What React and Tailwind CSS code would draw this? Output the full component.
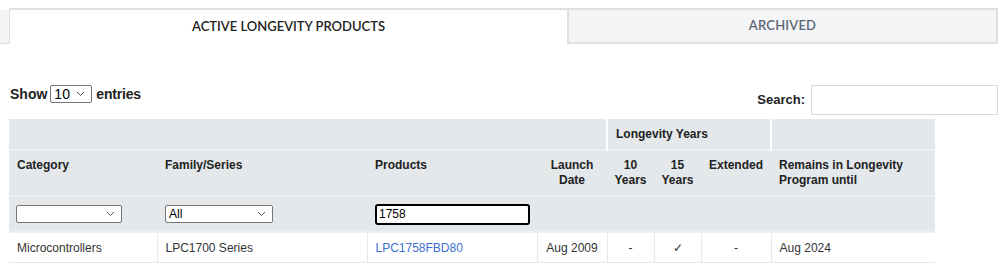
import React from "react";

const Chevron = () => (
  <svg width="9" height="6" viewBox="0 0 9 6" className="shrink-0">
    <path d="M1 1 L4.5 4.5 L8 1" fill="none" stroke="#555" strokeWidth="1" />
  </svg>
);

function FakeSelect({ value, className }) {
  return (
    <div
      className={
        "flex items-center justify-between bg-white border border-[#767676] rounded-[2px] pl-[3px] pr-[6px] leading-none text-black " +
        className
      }
    >
      <span>{value}</span>
      <Chevron />
    </div>
  );
}

export default function App() {
  const sans = { fontFamily: '"Liberation Sans", Arial, sans-serif' };
  return (
    <div className="w-[999px] h-[269px] bg-white overflow-hidden" style={sans}>
      {/* Tabs */}
      <div className="flex pt-[8px] h-[44px]" style={{ fontFamily: "Lato, sans-serif" }}>
        <div className="w-[9px] mt-[2px] bg-[#f4f5f7] border-b border-[#dcdcdc]" />
        <div className="w-[558px] border-t-2 border-l border-[#e0e0e0] bg-white flex items-center justify-center text-[13px] font-semibold text-[#222]">
          ACTIVE LONGEVITY PRODUCTS
        </div>
        <div className="w-[431px] border-2 border-[#e0e0e0] bg-[#f4f5f7] flex items-center justify-center text-[13px] font-semibold tracking-[0.2px] text-[#5b6574]">
          ARCHIVED
        </div>
      </div>

      {/* Controls */}
      <div className="flex justify-between items-start pl-[10px] pr-[1px] mt-[41px] h-[34px]">
        <div className="flex items-center text-[14px] font-bold text-[#222] h-[18px]">
          <span>Show</span>
          <FakeSelect value="10" className="w-[42px] h-[18px] ml-[3px] mr-[4px] text-[14px] font-normal" />
          <span className="tracking-[-0.2px]">entries</span>
        </div>
        <div className="flex items-center">
          <span className="text-[13px] font-bold text-[#222] mr-[6px] mb-[1px]">Search:</span>
          <div className="w-[187px] h-[30px] border border-[#d9d9d9] bg-white" />
        </div>
      </div>

      {/* Table */}
      <table className="ml-[9px] border-collapse table-fixed w-[926px] text-[#333]">
        <colgroup>
          <col className="w-[148px]" />
          <col className="w-[210px]" />
          <col className="w-[170px]" />
          <col className="w-[70px]" />
          <col className="w-[47px]" />
          <col className="w-[47px]" />
          <col className="w-[70px]" />
          <col className="w-[164px]" />
        </colgroup>
        <thead className="bg-[#e4e8eb] text-[12px] font-bold leading-[15px] text-[#222]">
          <tr className="h-[31px] border-b-2 border-[#eceff1]">
            <th colSpan={4} className="border-r-2 border-white" />
            <th colSpan={3} className="text-left pl-[8px] border-r-2 border-white">
              Longevity Years
            </th>
            <th />
          </tr>
          <tr className="h-[46px] border-b-2 border-[#eceff1] align-top">
            <th className="text-left px-[8px] pt-[7px]">Category</th>
            <th className="text-left px-[8px] pt-[7px]">Family/Series</th>
            <th className="text-left px-[8px] pt-[7px]">Products</th>
            <th className="text-center px-[4px] pt-[7px]">Launch<br />Date</th>
            <th className="text-center px-[2px] pt-[7px]">10<br />Years</th>
            <th className="text-center px-[2px] pt-[7px]">15<br />Years</th>
            <th className="text-center px-[4px] pt-[7px]">Extended</th>
            <th className="text-left px-[8px] pt-[7px]">Remains in Longevity<br />Program until</th>
          </tr>
          <tr className="h-[36px] border-b-2 border-[#eceff1]">
            <th className="text-left pl-[7px] font-normal">
              <FakeSelect value="" className="w-[106px] h-[18px] text-[12px]" />
            </th>
            <th className="text-left pl-[8px] font-normal">
              <FakeSelect value="All" className="w-[108px] h-[18px] text-[12px]" />
            </th>
            <th className="text-left pl-[8px] font-normal">
              <div className="w-[155px] h-[21px] border-2 border-black rounded-[3px] bg-white flex items-center pl-[2px] text-[12px] text-black">
                1758
              </div>
            </th>
            <th />
            <th />
            <th />
            <th />
            <th />
          </tr>
        </thead>
        <tbody className="text-[12px]">
          <tr className="h-[30px] border-b border-[#e6e9ec]">
            <td className="px-[8px] pt-[1px]">Microcontrollers</td>
            <td className="px-[8px] pt-[1px] border-l border-[#e6e9ec]">LPC1700 Series</td>
            <td className="px-[8px] pt-[1px] border-l border-[#e6e9ec] text-[#3b6fd4]">LPC1758FBD80</td>
            <td className="text-center pt-[1px] border-l border-[#e6e9ec]">Aug 2009</td>
            <td className="text-center pt-[1px] border-l border-[#e6e9ec]">-</td>
            <td className="text-center pt-[1px] border-l border-[#e6e9ec]">✓</td>
            <td className="text-center pt-[1px] border-l border-[#e6e9ec]">-</td>
            <td className="px-[8px] pt-[1px] border-l border-[#e6e9ec]">Aug 2024</td>
          </tr>
        </tbody>
      </table>
    </div>
  );
}
